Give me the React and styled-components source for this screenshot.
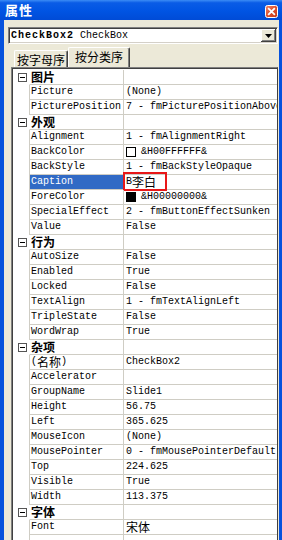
import React from 'react';
import styled, { createGlobalStyle } from 'styled-components';

const Global = createGlobalStyle`
  html, body { margin: 0; padding: 0; background: #ECE9D8; }
  body { width: 282px; height: 540px; overflow: hidden; }
  * { box-sizing: border-box; }
`;

const MONO = `"Liberation Mono", "Noto Sans CJK SC", monospace`;
const CJK = `"Noto Sans CJK SC", "Liberation Sans", sans-serif`;
const LINE = '#CFCDC4';

const Window = styled.div`
  width: 282px;
  height: 540px;
  display: flex;
  flex-direction: column;
  background: #ECE9D8;
`;

const TitleBar = styled.div`
  height: 20px;
  flex: none;
  display: flex;
  align-items: center;
  justify-content: space-between;
  padding: 0 4px 0 5px;
  background: linear-gradient(180deg, #3B8CF5 0%, #0A5CE6 14%, #0054E3 55%, #004BD6 100%);
`;

const Title = styled.span`
  color: #fff;
  font-family: ${CJK};
  font-weight: 700;
  font-size: 13px;
  letter-spacing: 1px;
  line-height: 16px;
`;

const CloseBox = styled.span`
  display: flex;
  width: 13px;
  height: 13px;
  margin-top: 3px;
`;

const Body = styled.div`
  flex: 1;
  display: flex;
  flex-direction: column;
  min-height: 0;
  padding: 7px 1px 0 4px;
  border-left: 4px solid #0652DD;
  border-right: 3px solid #0652DD;
`;

const Combo = styled.div`
  height: 17px;
  flex: none;
  display: flex;
  align-items: center;
  background: #fff;
  border: 1px solid;
  border-color: #808080 #fff #fff #808080;
  box-shadow: inset 1px 1px #404040, inset -1px -1px #D4D0C8;
  padding: 0 1px 0 2px;
`;

const ComboText = styled.span`
  flex: 1;
  font-family: ${MONO};
  font-size: 10px;
  line-height: 13px;
  color: #000;
  white-space: nowrap;
`;

const Strong = styled.b`
  letter-spacing: 1px;
`;

const ComboButton = styled.span`
  width: 15px;
  height: 13px;
  display: flex;
  align-items: center;
  justify-content: center;
  background: #ECE9D8;
  box-shadow: inset -1px -1px #404040, inset 1px 1px #fff, inset -2px -2px #808080;
`;

const Tabs = styled.div`
  height: 23px;
  flex: none;
  display: flex;
  align-items: flex-end;
  padding-left: 6px;
`;

const Tab = styled.div`
  width: ${p => (p.$active ? 62 : 54)}px;
  height: ${p => (p.$active ? 20 : 17)}px;
  display: flex;
  align-items: center;
  justify-content: center;
  padding-bottom: ${p => (p.$active ? 3 : 0)}px;
  font-family: ${CJK};
  font-size: 12px;
  line-height: 15px;
  white-space: nowrap;
  color: #000;
  background: #ECE9D8;
  border-top: 1px solid #fff;
  border-left: 1px solid #fff;
  border-right: 1px solid #404040;
  box-shadow: inset -1px 0 #808080;
  border-radius: 2px 2px 0 0;
`;

const Grid = styled.div`
  flex: 1;
  min-height: 0;
  overflow: hidden;
  margin-left: 3px;
  background: #fff;
  border-top: 1px solid #808080;
  border-left: 1px solid #808080;
  border-right: 1px solid #404040;
  box-shadow: inset 1px 1px #404040;
  padding: 2px 0 0 1px;
`;

const Row = styled.div`
  display: grid;
  grid-template-columns: 16px 94px 1fr;
  height: 15px;
  font-family: ${MONO};
  font-size: 10px;
  color: #000;
`;

const Margin = styled.div`
  display: flex;
  align-items: center;
  padding-left: 5px;
`;

const Toggle = styled.span`
  width: 9px;
  height: 9px;
  border: 1px solid #555;
  display: flex;
  align-items: center;
  justify-content: center;
  background: #fff;
  &::after {
    content: '';
    width: 5px;
    height: 1px;
    background: #000;
  }
`;

const NameCell = styled.div`
  display: flex;
  align-items: center;
  border-left: 1px solid ${p => (p.$category ? 'transparent' : LINE)};
  border-bottom: 1px solid ${LINE};
  padding-left: 1px;
  line-height: 14px;
  white-space: pre;
  background: ${p => (p.$selected ? '#316AC5' : 'transparent')};
  color: ${p => (p.$selected ? '#fff' : '#000')};
`;

const CategoryLabel = styled.span`
  font-family: ${CJK};
  font-weight: 700;
  font-size: 12px;
  line-height: 14px;
`;

const ValueCell = styled.div`
  position: relative;
  min-width: 0;
  border-left: 1px solid ${LINE};
  border-bottom: 1px solid ${LINE};
  padding-left: 2px;
  line-height: 14px;
  white-space: pre;
  display: flex;
  align-items: center;
`;

const Han = styled.span`
  font-family: ${CJK};
  font-size: 12px;
  line-height: 14px;
`;

const Swatch = styled.span`
  width: 10px;
  height: 10px;
  flex: none;
  border: 1px solid #000;
  background: ${p => p.$color};
  margin-right: 5px;
`;

const Marker = styled.span`
  position: absolute;
  left: -1px;
  top: -3px;
  width: 44px;
  height: 19px;
  border: 2px solid #E81818;
  pointer-events: none;
`;

const renderText = (s) => {
  const parts = s.split(/([\u4e00-\u9fff]+)/).filter(Boolean);
  return parts.map((p, i) =>
    /[\u4e00-\u9fff]/.test(p) ? <Han key={i}>{p}</Han> : <span key={i}>{p}</span>
  );
};

const sections = [
  { title: '图片', rows: [
    { n: 'Picture', v: '(None)' },
    { n: 'PicturePosition', v: '7 - fmPicturePositionAbove' },
  ] },
  { title: '外观', rows: [
    { n: 'Alignment', v: '1 - fmAlignmentRight' },
    { n: 'BackColor', v: '&H00FFFFFF&', swatch: '#fff' },
    { n: 'BackStyle', v: '1 - fmBackStyleOpaque' },
    { n: 'Caption', v: 'B李白', selected: true, marked: true },
    { n: 'ForeColor', v: '&H00000000&', swatch: '#000' },
    { n: 'SpecialEffect', v: '2 - fmButtonEffectSunken' },
    { n: 'Value', v: 'False' },
  ] },
  { title: '行为', rows: [
    { n: 'AutoSize', v: 'False' },
    { n: 'Enabled', v: 'True' },
    { n: 'Locked', v: 'False' },
    { n: 'TextAlign', v: '1 - fmTextAlignLeft' },
    { n: 'TripleState', v: 'False' },
    { n: 'WordWrap', v: 'True' },
  ] },
  { title: '杂项', rows: [
    { n: '(名称)', v: 'CheckBox2' },
    { n: 'Accelerator', v: '' },
    { n: 'GroupName', v: 'Slide1' },
    { n: 'Height', v: '56.75' },
    { n: 'Left', v: '365.625' },
    { n: 'MouseIcon', v: '(None)' },
    { n: 'MousePointer', v: '0 - fmMousePointerDefault' },
    { n: 'Top', v: '224.625' },
    { n: 'Visible', v: 'True' },
    { n: 'Width', v: '113.375' },
  ] },
  { title: '字体', rows: [
    { n: 'Font', v: '宋体' },
    { n: '', v: '' },
  ] },
];

const CloseIcon = () => (
  <svg width="13" height="13" viewBox="0 0 13 13">
    <defs>
      <linearGradient id="cg" x1="0" y1="0" x2="1" y2="1">
        <stop offset="0" stopColor="#F08A6E" />
        <stop offset="0.5" stopColor="#E0502C" />
        <stop offset="1" stopColor="#C43A1A" />
      </linearGradient>
    </defs>
    <rect x="0.5" y="0.5" width="12" height="12" rx="2" fill="url(#cg)" stroke="#fff" />
    <path d="M3.8 3.8 L9.2 9.2 M9.2 3.8 L3.8 9.2" stroke="#fff" strokeWidth="1.8" strokeLinecap="square" />
  </svg>
);

const ArrowIcon = () => (
  <svg width="7" height="4" viewBox="0 0 7 4">
    <path d="M0 0 H7 L3.5 4 Z" fill="#000" />
  </svg>
);

export default function App() {
  return (
    <>
      <Global />
      <Window>
        <TitleBar>
          <Title>属性</Title>
          <CloseBox><CloseIcon /></CloseBox>
        </TitleBar>
        <Body>
          <Combo>
            <ComboText><Strong>CheckBox2</Strong> CheckBox</ComboText>
            <ComboButton><ArrowIcon /></ComboButton>
          </Combo>
          <Tabs>
            <Tab>按字母序</Tab>
            <Tab $active>按分类序</Tab>
          </Tabs>
          <Grid>
            {sections.map((s) => (
              <React.Fragment key={s.title}>
                <Row>
                  <Margin><Toggle /></Margin>
                  <NameCell $category><CategoryLabel>{s.title}</CategoryLabel></NameCell>
                  <ValueCell />
                </Row>
                {s.rows.map((r, i) => (
                  <Row key={s.title + i}>
                    <Margin />
                    <NameCell $selected={r.selected}>{renderText(r.n)}</NameCell>
                    <ValueCell>
                      {r.swatch && <Swatch $color={r.swatch} />}
                      {renderText(r.v)}
                      {r.marked && <Marker />}
                    </ValueCell>
                  </Row>
                ))}
              </React.Fragment>
            ))}
          </Grid>
        </Body>
      </Window>
    </>
  );
}
